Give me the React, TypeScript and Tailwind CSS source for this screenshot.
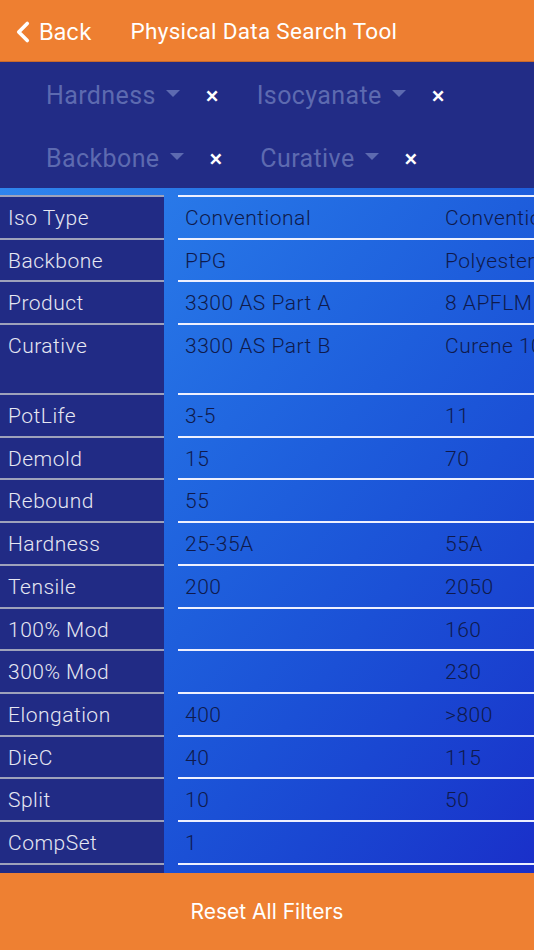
import { ChevronLeft } from 'lucide-react'

const filters = [
  ['Hardness', 'Isocyanate'],
  ['Backbone', 'Curative'],
]

const rows: { label: string; values: string[]; tall?: boolean }[] = [
  { label: 'Iso Type', values: ['Conventional', 'Conventional'] },
  { label: 'Backbone', values: ['PPG', 'Polyester'] },
  { label: 'Product', values: ['3300 AS Part A', '8 APFLM'] },
  { label: 'Curative', values: ['3300 AS Part B', 'Curene 107'], tall: true },
  { label: 'PotLife', values: ['3-5', '11'] },
  { label: 'Demold', values: ['15', '70'] },
  { label: 'Rebound', values: ['55', ''] },
  { label: 'Hardness', values: ['25-35A', '55A'] },
  { label: 'Tensile', values: ['200', '2050'] },
  { label: '100% Mod', values: ['', '160'] },
  { label: '300% Mod', values: ['', '230'] },
  { label: 'Elongation', values: ['400', '>800'] },
  { label: 'DieC', values: ['40', '115'] },
  { label: 'Split', values: ['10', '50'] },
  { label: 'CompSet', values: ['1', ''] },
  // next row starts just above the footer, nothing of its text shows
  { label: '', values: ['', ''] },
]

const tableFont = "font-['Roboto',sans-serif] font-light text-[21px] leading-[24px] tracking-[0.5px]"

export default function App() {
  return (
    <div className="flex h-[950px] w-[534px] flex-col overflow-hidden bg-[#222c86]">
      {/* Header */}
      <div className="flex h-[62px] shrink-0 items-center border-b border-[#c9692b] bg-[#ee7f31] pt-[2px] text-white">
        <div className="flex items-center pl-[6px]">
          <ChevronLeft className="h-[34px] w-[34px]" strokeWidth={2.6} />
          <span className="ml-[-1px] font-['Inter',sans-serif] text-[22.5px]">Back</span>
        </div>
        <h1 className="ml-[39px] font-['Roboto',sans-serif] text-[22.5px] tracking-[0.3px]">
          Physical Data Search Tool
        </h1>
      </div>

      {/* Filters */}
      <div className="flex h-[126px] shrink-0 flex-col justify-center gap-[25px] bg-[#222c86] pl-[46px] pt-[4px] font-['Roboto',sans-serif]">
        {filters.map((line, i) => (
          <div key={i} className="flex items-center gap-[38px]">
            {line.map((f) => (
              <div key={f} className="flex items-center">
                <span className="text-[25px] leading-[38px] tracking-[0.4px] text-[#5d6ab0]">{f}</span>
                <span className="ml-[10px] mb-[4px] h-0 w-0 border-x-[7px] border-t-[7px] border-x-transparent border-t-[#5d6ab0]" />
                <span className="ml-[26px] text-[24px] font-medium text-white">×</span>
              </div>
            ))}
          </div>
        ))}
      </div>

      {/* Table */}
      <div className="flex flex-1 overflow-hidden bg-linear-to-br from-[#2f85ee] to-[#1a2fc9] pt-[7px]">
        <div className="w-[164px] shrink-0 self-start bg-[#212b85]">
          {rows.map((r, idx) => (
            <div
              key={idx}
              className={`border-t-2 border-[#9ea2bb] pl-[8px] pt-[9px] text-[#e6e7f2] ${tableFont} ${r.tall ? 'h-[70px]' : 'h-[42.7px]'}`}
            >
              {r.label}
            </div>
          ))}
        </div>
        <div className="ml-[14px] flex-1 overflow-hidden">
          {rows.map((r, idx) => (
            <div
              key={idx}
              className={`flex border-t-2 border-[#eef0ff] pl-[7px] pt-[9px] text-[#0f1a4c] ${tableFont} ${r.tall ? 'h-[70px]' : 'h-[42.7px]'}`}
            >
              {r.values.map((v, i) => (
                <span key={i} className="w-[260px] shrink-0 whitespace-nowrap">
                  {v}
                </span>
              ))}
            </div>
          ))}
        </div>
      </div>

      {/* Footer */}
      <button className="flex h-[77px] shrink-0 items-center justify-center bg-[#ee8032] font-['Inter',sans-serif] text-[21px] text-white">
        Reset All Filters
      </button>
    </div>
  )
}
